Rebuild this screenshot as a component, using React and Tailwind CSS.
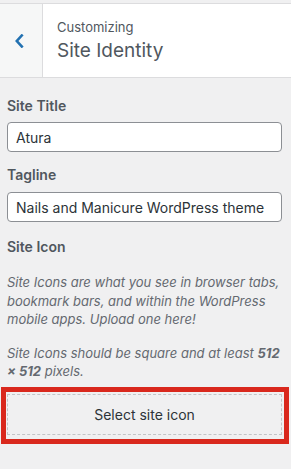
import React from 'react';

const Chevron = () => (
  <svg width="10" height="14" viewBox="0 0 10 14" fill="none">
    <path d="M7.8 1.5 L2.8 7 L7.8 12.5" stroke="#2271b1" strokeWidth="2.6" strokeLinecap="square" />
  </svg>
);

const App = () => {
  return (
    <div className="w-[291px] h-[469px] bg-[#f0f0f1] font-['Inter',sans-serif] overflow-hidden">
      <div className="h-[3px] bg-[#f0f0f1]" />
      {/* header */}
      <div className="flex h-[75px] border-y border-[#dcdcde] bg-white">
        <div className="w-[43px] shrink-0 flex items-center justify-center bg-[#f6f7f7] border-r border-[#dcdcde] pr-[4px]">
          <Chevron />
        </div>
        <div className="pl-[14px] pt-[14px]">
          <div className="text-[13px] leading-[18px] text-[#50575e]">Customizing</div>
          <div className="text-[19px] leading-[26px] mt-[2px] text-[#50575e]">Site Identity</div>
        </div>
      </div>

      {/* body */}
      <div className="pl-[7px] pr-[9px] pt-[18px]">
        <label className="block text-[14px] leading-[20px] font-semibold text-[#50575e]">Site Title</label>
        <input
          defaultValue="Atura"
          className="mt-[6px] w-full h-[30px] px-[8px] text-[14px] text-[#2c3338] bg-white border border-[#8c8f94] rounded-[4px] outline-none"
        />

        <label className="block mt-[13px] text-[14px] leading-[20px] font-semibold text-[#50575e]">Tagline</label>
        <input
          defaultValue="Nails and Manicure WordPress theme"
          className="mt-[7px] w-full h-[30px] px-[8px] text-[14px] text-[#2c3338] bg-white border border-[#8c8f94] rounded-[4px] outline-none"
        />

        <div className="mt-[15px] text-[14px] leading-[20px] font-semibold text-[#50575e]">Site Icon</div>

        <p className="mt-[16px] text-[13px] leading-[18.5px] italic text-[#646970]">
          Site Icons are what you see in browser tabs, bookmark bars, and within the WordPress mobile apps. Upload one here!
        </p>
        <p className="mt-[15px] text-[13px] leading-[18.5px] italic text-[#646970]">
          Site Icons should be square and at least <strong>512</strong>
          <br />
          <strong>× 512</strong> pixels.
        </p>
      </div>

      <div className="ml-[1px] mt-[6px] w-[288px] border-[5px] border-[#d9281d] pl-[1px] pr-[2px] pt-[2px] pb-[4px]">
        <button className="w-full h-[41px] flex items-center justify-center border border-dashed border-[#c3c4c7] text-[14px] text-[#2c3338]">
          Select site icon
        </button>
      </div>
    </div>
  );
};

export default App;
